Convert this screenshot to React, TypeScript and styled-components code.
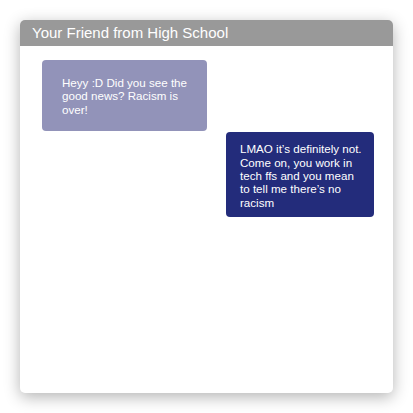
import React from "react";
import styled, { createGlobalStyle } from "styled-components";

const Global = createGlobalStyle`
  html, body { margin: 0; padding: 0; background: #ffffff; }
  body { font-family: "Liberation Sans", Arial, Helvetica, sans-serif; }
`;

const Page = styled.div`
  width: 413px;
  height: 413px;
  padding: 20px;
  box-sizing: border-box;
`;

const Card = styled.div`
  width: 373px;
  height: 373px;
  background: #ffffff;
  border-radius: 5px;
  box-shadow: 0 4px 16px rgba(0, 0, 0, 0.3);
  overflow: hidden;
  display: flex;
  flex-direction: column;
`;

const Header = styled.div`
  height: 26px;
  background: #999999;
  color: #ffffff;
  font-size: 15px;
  line-height: 26px;
  padding-left: 12px;
`;

const Messages = styled.div`
  display: flex;
  flex-direction: column;
  padding: 14px 19px 0 22px;
  gap: 1px;
`;

const Bubble = styled.div<{ $mine?: boolean; $w: number }>`
  width: ${(p) => p.$w}px;
  box-sizing: border-box;
  align-self: ${(p) => (p.$mine ? "flex-end" : "flex-start")};
  background: ${(p) => (p.$mine ? "#232c7b" : "#9293b9")};
  color: #ffffff;
  border-radius: 4px;
  font-size: 11.6px;
  line-height: 13.4px;
  padding: ${(p) => (p.$mine ? "10px 12px 8px 14px" : "16px 18px 15px 20px")};
`;

export default function App() {
  return (
    <>
      <Global />
      <Page>
        <Card>
          <Header>Your Friend from High School</Header>
          <Messages>
            <Bubble $w={165}>Heyy :D Did you see the good news? Racism is over!</Bubble>
            <Bubble $mine $w={148}>
              LMAO it’s definitely not. Come on, you work in tech ffs and you mean to tell me there’s no racism
            </Bubble>
          </Messages>
        </Card>
      </Page>
    </>
  );
}
